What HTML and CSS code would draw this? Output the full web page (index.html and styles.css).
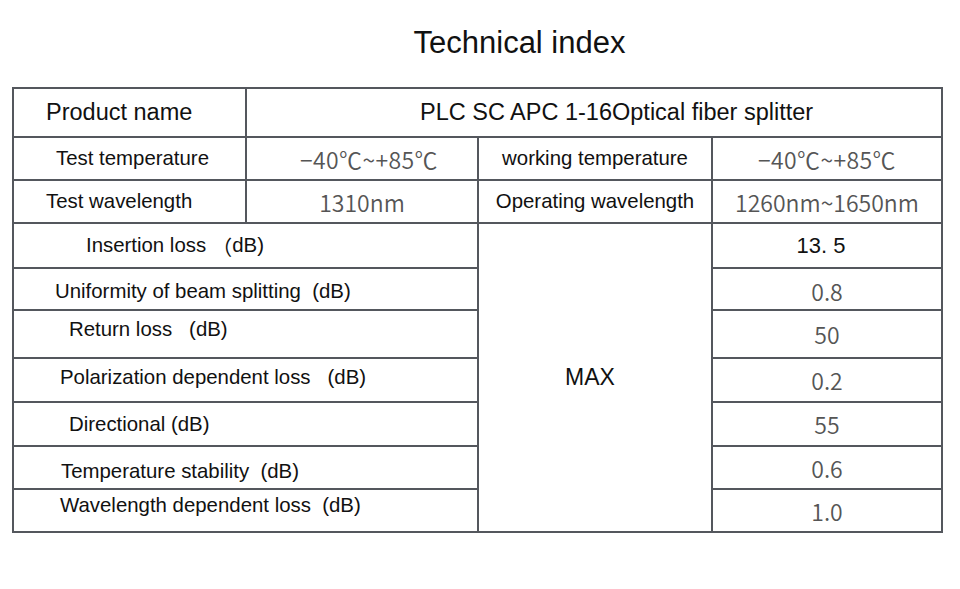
FILE: index.html
```html
<!DOCTYPE html>
<html lang="en">
<head>
<meta charset="utf-8">
<title>Technical index</title>
<link rel="stylesheet" href="styles.css">
</head>
<body>
<h1 class="title">Technical index</h1>
<div class="spec">
  <div class="cell label big pad-32">Product name</div>
  <div class="cell label big wide pad-173">PLC SC APC 1-16Optical fiber splitter</div>

  <div class="cell label pad-42">Test temperature</div>
  <div class="cell val center shift-r"><span class="temp">−40℃~+85℃</span></div>
  <div class="cell label center">working temperature</div>
  <div class="cell val center"><span class="temp">−40℃~+85℃</span></div>

  <div class="cell label pad-32">Test wavelength</div>
  <div class="cell val center">1310nm</div>
  <div class="cell label center">Operating wavelength</div>
  <div class="cell val center">1260nm~1650nm</div>

  <div class="cell label span2 pad-72">Insertion loss <span class="cjk">（</span>dB)</div>
  <div class="cell max center">MAX</div>
  <div class="cell val dark center">13. 5</div>

  <div class="cell label span2 pad-41 low">Uniformity of beam splitting &nbsp;(dB)</div>
  <div class="cell val center low">0.8</div>

  <div class="cell label span2 pad-55 up">Return loss &nbsp; (dB)</div>
  <div class="cell val center">50</div>

  <div class="cell label span2 pad-46 up-s">Polarization dependent loss &nbsp; (dB)</div>
  <div class="cell val center">0.2</div>

  <div class="cell label span2 pad-55">Directional (dB)</div>
  <div class="cell val center">55</div>

  <div class="cell label span2 pad-47 down">Temperature stability &nbsp;(dB)</div>
  <div class="cell val center">0.6</div>

  <div class="cell label span2 pad-46 up-l">Wavelength dependent loss &nbsp;(dB)</div>
  <div class="cell val center">1.0</div>
</div>
</body>
</html>
```

FILE: styles.css
```css
html, body {
  margin: 0;
  padding: 0;
  background: #ffffff;
}

body {
  width: 960px;
  height: 589px;
  font-family: "Liberation Sans", Arial, sans-serif;
  color: #111111;
}

.title {
  margin: 0;
  padding: 27px 0 0 79px;
  height: 87px;
  box-sizing: border-box;
  font-size: 31px;
  line-height: 31px;
  font-weight: normal;
  text-align: center;
  color: #111;
}

.spec {
  margin-left: 12px;
  width: 931px;
  box-sizing: border-box;
  display: grid;
  grid-template-columns: 231px 230px 232px 228px;
  grid-template-rows: 47px 41px 41px 43px 40px 46px 42px 42px 41px 41px;
  gap: 2px;
  padding: 2px;
  background: #54575d;
}

.cell {
  background: #ffffff;
  display: flex;
  align-items: center;
  white-space: pre;
  box-sizing: border-box;
}

.label {
  font-size: 20.4px;
  color: #111;
}

.big {
  font-size: 23.5px;
}

.wide {
  grid-column: 2 / 5;
}

.span2 {
  grid-column: span 2;
}

.center {
  justify-content: center;
}

.shift-r {
  padding-left: 14px;
}

.max {
  grid-row: span 7;
  font-size: 23px;
  color: #111;
  padding-right: 10px;
}

.val {
  font-family: "Noto Sans CJK SC", "Liberation Sans", sans-serif;
  font-weight: 350;
  font-size: 23px;
  color: #555555;
}

.temp {
  letter-spacing: 0.4px;
}

.val.dark {
  font-family: "Liberation Sans", Arial, sans-serif;
  font-weight: normal;
  font-size: 22px;
  color: #111;
  padding-right: 12px;
}

.cjk {
  font-family: "Noto Sans CJK SC", sans-serif;
}

.pad-32 { padding-left: 32px; }
.pad-41 { padding-left: 41px; }
.pad-42 { padding-left: 42px; }
.pad-46 { padding-left: 46px; }
.pad-47 { padding-left: 47px; }
.pad-55 { padding-left: 55px; }
.pad-72 { padding-left: 72px; }
.pad-173 { padding-left: 173px; }

.up { padding-bottom: 10px; }
.up-s { padding-bottom: 6px; }
.up-l { padding-bottom: 11px; }
.down { padding-top: 7px; }
.low { padding-top: 4px; }
```
